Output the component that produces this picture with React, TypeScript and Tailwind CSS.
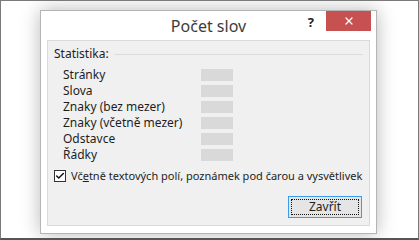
import { Check, X } from "lucide-react";

const rows = ["Stránky", "Slova", "Znaky (bez mezer)", "Znaky (včetně mezer)", "Odstavce", "Řádky"];

export default function App() {
    return (
        <div
            className="w-[419px] h-[240px] bg-white border border-[#7a7a7a] border-b-2 border-b-[#555] overflow-hidden"
            style={{ fontFamily: '"Noto Sans", "Open Sans", sans-serif' }}
        >
            <div className="ml-[39px] mt-[9px] w-[337px] h-[224px] bg-white border border-[#b5b5b5] shadow-[0_0_18px_rgba(0,0,0,0.28)] flex flex-col">
                {/* title bar */}
                <div className="h-[29px] grid grid-cols-[1fr_auto_1fr] shrink-0">
                    <div />
                    <div className="text-[16px] leading-[29px] text-[#3c3c3c] pt-[1px]">Počet slov</div>
                    <div className="flex justify-end items-start pr-[5px]">
                        <span className="mt-[3px] mr-[12px] text-[13px] font-bold text-[#222] leading-[16px]">?</span>
                        <div className="w-[45px] h-[20px] bg-[#c75050] flex items-center justify-center">
                            <X size={12} strokeWidth={2.6} color="white" />
                        </div>
                    </div>
                </div>
                {/* body */}
                <div className="mx-[6px] mb-[7px] flex-1 bg-[#f0f0f0] border border-[#d9d9d9] px-[6px] pt-[5px] text-[12px] text-[#1e1e1e]">
                    <div className="flex items-center gap-[5px] h-[16px]">
                        <span>Statistika:</span>
                        <div className="flex-1 h-px bg-[#dcdcdc]" />
                    </div>
                    <div className="mt-[5px] pl-[9px] flex flex-col">
                        {rows.map((r) => (
                            <div key={r} className="flex items-center h-[16px]">
                                <span className="w-[138px] leading-[16px]">{r}</span>
                                <div className="w-[32px] h-[12px] bg-[#d9d9d9]" />
                            </div>
                        ))}
                    </div>
                    <div className="mt-[5px] flex items-center gap-[5px] h-[16px] whitespace-nowrap">
                        <div className="shrink-0 w-[12px] h-[12px] border border-[#333] bg-white flex items-center justify-center">
                            <Check size={10} strokeWidth={3.5} color="#111" />
                        </div>
                        <span className="text-[11px]">
                            Vč<span className="underline">e</span>tně textových polí, poznámek pod čarou a vysvětlivek
                        </span>
                    </div>
                    <div className="mt-[12px] flex justify-end pr-[1px]">
                        <div className="w-[74px] h-[22px] border border-[#3c9bea] bg-[#e5e5e5] p-[2px]">
                            <div className="w-full h-full border border-dotted border-[#111] flex items-center justify-center leading-none">
                                Zavřít
                            </div>
                        </div>
                    </div>
                </div>
            </div>
        </div>
    );
}
